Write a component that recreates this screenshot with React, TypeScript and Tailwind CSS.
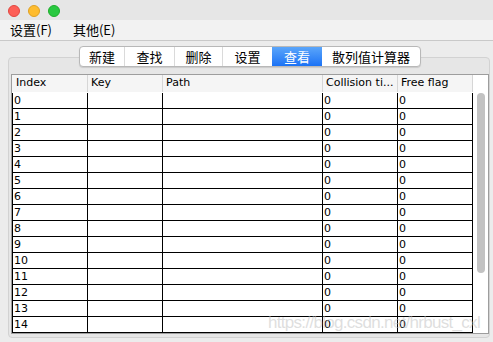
import React from 'react';

const tabs = [
  { label: '新建', w: 'w-[45px]' },
  { label: '查找', w: 'w-[50px]' },
  { label: '删除', w: 'w-[48px]' },
  { label: '设置', w: 'w-[49px]' },
  { label: '查看', w: 'w-[50px]', active: true },
  { label: '散列值计算器', w: 'w-[98px]' },
];

const columns = [
  { title: 'Index', w: 'w-[75px]' },
  { title: 'Key', w: 'w-[75px]' },
  { title: 'Path', w: 'w-[160px]' },
  { title: 'Collision ti...', w: 'w-[75px]' },
  { title: 'Free flag', w: 'w-[75px]' },
];

const rows = Array.from({ length: 15 }, (_, i) => [String(i), '', '', '0', '0']);

export default function App() {
  return (
    <div
      className="relative w-[493px] h-[342px] bg-[#ececec] flex flex-col overflow-hidden text-black"
      style={{ fontFamily: '"DejaVu Sans", "Noto Sans CJK SC", sans-serif' }}
    >
      {/* title bar */}
      <div className="h-[20px] bg-[#e6e6e6] flex items-center gap-[8px] pl-[8px] pt-[1px] shrink-0">
        <span className="w-[12px] h-[12px] rounded-full bg-[#fd5f57] border border-[#e14640]" />
        <span className="w-[12px] h-[12px] rounded-full bg-[#febc2e] border border-[#dfa123]" />
        <span className="w-[12px] h-[12px] rounded-full bg-[#28c840] border border-[#1dad2b]" />
      </div>

      {/* menu bar */}
      <div className="h-[21px] bg-[#f2f2f2] border-b border-[#c9c9c9] flex items-center pl-[10px] gap-[21px] text-[13px] shrink-0 font-['Noto_Sans_CJK_SC',sans-serif]">
        <span>设置(F)</span>
        <span>其他(E)</span>
      </div>

      {/* tabs */}
      <div className="relative z-10 mt-[5px] h-[21px] flex justify-center pl-[7px] shrink-0">
        <div className="flex h-[21px] bg-white border border-[#b8b8b8] rounded-[4px] shadow-[0_1px_1px_rgba(0,0,0,0.12)] overflow-hidden text-[13px] font-['Noto_Sans_CJK_SC',sans-serif]">
          {tabs.map((t, i) => (
            <div
              key={t.label}
              className={
                t.active
                  ? `${t.w} flex items-center justify-center text-white bg-gradient-to-b from-[#5aa5fa] to-[#1a72f5]`
                  : `${t.w} flex items-center justify-center ${i < tabs.length - 1 && !tabs[i + 1].active ? 'border-r border-[#dadada]' : ''}`
              }
            >
              {t.label}
            </div>
          ))}
        </div>
      </div>

      {/* panel */}
      <div className="-mt-[10px] ml-[8px] w-[482px] h-[281px] bg-[#e6e6e6] border border-[#d2d2d2] rounded-[4px] pl-[2px] pt-[16px]">
        <div className="w-[478px] h-[260px] bg-white border border-[#9d9d9d] flex">
          <div className="w-[461px] flex flex-col">
            {/* header */}
            <div className="h-[18px] flex bg-[#f5f5f5] border-b border-white text-[11px]">
              {columns.map((c, i) => (
                <div
                  key={c.title}
                  className={`${c.w} ${i === 0 ? 'ml-[1px]' : ''} h-full border-r border-[#d6d6d6] pl-[3px] flex items-center whitespace-nowrap overflow-hidden`}
                >
                  {c.title}
                </div>
              ))}
            </div>
            {/* body */}
            <div className="border-l border-black">
              {rows.map((r) => (
                <div key={r[0]} className="h-[16px] flex border-b border-black text-[11px] leading-none">
                  {r.map((v, j) => (
                    <div key={j} className={`${columns[j].w} h-full border-r border-black pl-[1px] flex items-center`}>
                      {v}
                    </div>
                  ))}
                </div>
              ))}
            </div>
          </div>
          {/* scrollbar */}
          <div className="w-[15px] pt-[18px] pl-[4px]">
            <div className="w-[8px] h-[180px] rounded-full bg-[#c2c2c2]" />
          </div>
        </div>
      </div>

      {/* watermark */}
      <div className="absolute left-[268px] top-[313px] text-[17px] leading-[20px] tracking-[-0.7px] text-[#bdbdbd]/50 whitespace-nowrap font-['Liberation_Sans',sans-serif]">
        https://blog.csdn.net/hrbust_cxl
      </div>
    </div>
  );
}
